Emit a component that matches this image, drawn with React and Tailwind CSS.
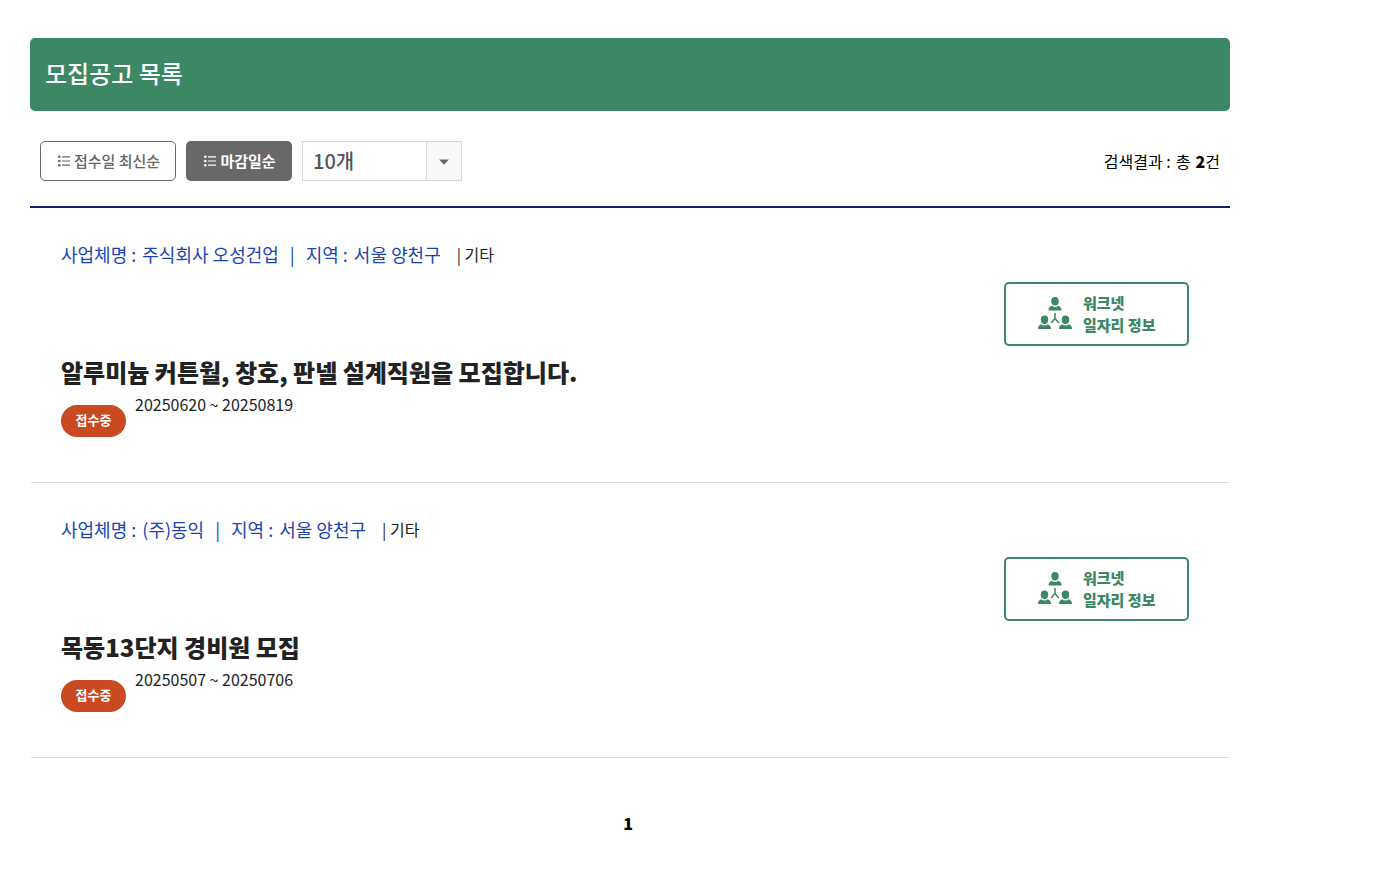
const jobs = [
  {
    id: 1,
    company: '주식회사 오성건업',
    region: '서울 양천구',
    title: '알루미늄 커튼월, 창호, 판넬 설계직원을 모집합니다.',
    period: '20250620 ~ 20250819',
  },
  {
    id: 2,
    company: '(주)동익',
    region: '서울 양천구',
    title: '목동13단지 경비원 모집',
    period: '20250507 ~ 20250706',
  },
];

function ListIcon() {
  return (
    <svg viewBox="0 0 12 12" className="h-3 w-3" fill="currentColor" aria-hidden="true">
      <circle cx="1.3" cy="1.8" r="1.3" />
      <circle cx="1.3" cy="6" r="1.3" />
      <circle cx="1.3" cy="10.2" r="1.3" />
      <path d="M4 1.2h8v1.2H4zM4 5.4h8v1.2H4zM4 9.6h8v1.2H4z" />
    </svg>
  );
}

function Person({ x, y }) {
  return (
    <g transform={`translate(${x} ${y})`}>
      <ellipse cx="6.5" cy="4.2" rx="3.7" ry="4.2" />
      <path d="M0 13.500c0-2.300 1-3.900 3.300-4.700C4.200 9.600 5.300 10 6.500 10s2.300-.4 3.200-1.200C12 9.600 13 11.200 13 13.500z" />
    </g>
  );
}

function NetworkIcon() {
  return (
    <svg viewBox="0 0 34 34" className="h-[34px] w-[34px]" fill="currentColor" aria-hidden="true">
      <Person x={10.5} y={0} />
      <Person x={0} y={18.5} />
      <Person x={21} y={18.5} />
      <path d="M17 16v5.500m0 0-3.800 4.500M17 21.500l3.800 4.500" fill="none" stroke="currentColor" strokeWidth="1.500" />
    </svg>
  );
}

function Field({ label, value }) {
  return (
    <span className="flex gap-[6px]">
      <span>{label} :</span>
      <span>{value}</span>
    </span>
  );
}

function Job({ job }) {
  return (
    <li className="mx-px flex flex-col border-b border-[#dbdbdb] px-[30px] pt-[31px] pb-[45px]">
      <div className="flex flex-wrap items-center text-lg leading-[30px] text-[#1b44b5]">
        <Field label="사업체명" value={job.company} />
        <span className="mx-[11px]">|</span>
        <Field label="지역" value={job.region} />
        <span className="ml-4 text-base leading-[30px] text-[#222]">| 기타</span>
      </div>
      <a
        href="#worknet"
        className="mt-[13px] mr-[10px] flex h-16 w-[185px] items-center gap-[11px] self-end rounded-[5px] border-2 border-[#3c8764] pl-8 text-[#3c8764]"
      >
        <NetworkIcon />
        <span className="text-[15px] leading-[22px] font-black">
          워크넷
          <br />
          일자리 정보
        </span>
      </a>
      <h2 className="mt-2 text-2xl leading-9 font-black">
        <a href="#job">{job.title}</a>
      </h2>
      <div className="mt-[2px] flex items-start gap-[9px]">
        <span className="mt-[13px] flex h-8 w-[65px] justify-center rounded-2xl bg-[#c94a20] text-[13px] leading-[30px] font-bold text-white">
          접수중
        </span>
        <span className="text-base leading-6">{job.period}</span>
      </div>
    </li>
  );
}

export default function App() {
  return (
    <main className="mx-[30px] max-w-[1200px] pt-[38px] pb-10 font-['Noto_Sans_CJK_KR','Noto_Sans',sans-serif] text-[#222]">
      <h1 className="rounded-[5px] bg-[#3c8764] px-[15px] pt-[17px] pb-5 text-2xl leading-9 font-medium text-white">
        모집공고 목록
      </h1>
      <div className="flex items-center gap-[10px] border-b-2 border-[#0b2078] px-[10px] pt-[30px] pb-[25px]">
        <button
          type="button"
          className="flex h-10 w-[136px] items-center justify-center gap-1 rounded-[5px] border border-[#686868] bg-white pl-[2px] text-[15px] font-medium text-[#686868]"
        >
          <ListIcon />
          접수일 최신순
        </button>
        <button
          type="button"
          className="flex h-10 w-[106px] items-center justify-center gap-1 rounded-[5px] bg-[#686868] pl-[2px] text-[15px] font-bold text-white"
        >
          <ListIcon />
          마감일순
        </button>
        <div className="relative h-10 w-40">
          <select
            aria-label="페이지당 개수"
            className="h-full w-full appearance-none border border-[#d7d7d7] bg-white pl-[10px] text-xl font-medium text-[#555]"
          >
            <option>10개</option>
            <option>20개</option>
            <option>30개</option>
          </select>
          <span className="pointer-events-none absolute inset-y-0 right-0 flex w-9 items-center justify-center border border-[#d7d7d7] bg-[#f8f8f8] text-[#686868]">
            <svg viewBox="0 0 10 6" className="mt-[2px] h-[6px] w-[10px]" fill="currentColor" aria-hidden="true">
              <path d="M0 .5h10L5 5.800z" />
            </svg>
          </span>
        </div>
        <p className="ml-auto flex gap-[5px] text-base leading-6 text-black">
          <span>검색결과 :</span>
          <span>총</span>
          <span>
            <strong className="font-black">2</strong>건
          </span>
        </p>
      </div>
      <ul>
        {jobs.map((job) => (
          <Job key={job.id} job={job} />
        ))}
      </ul>
      <nav aria-label="페이지" className="flex justify-center pt-[53px] pr-1">
        <a href="#page-1" aria-current="page" className="text-base leading-6 font-black text-black">
          1
        </a>
      </nav>
    </main>
  );
}
